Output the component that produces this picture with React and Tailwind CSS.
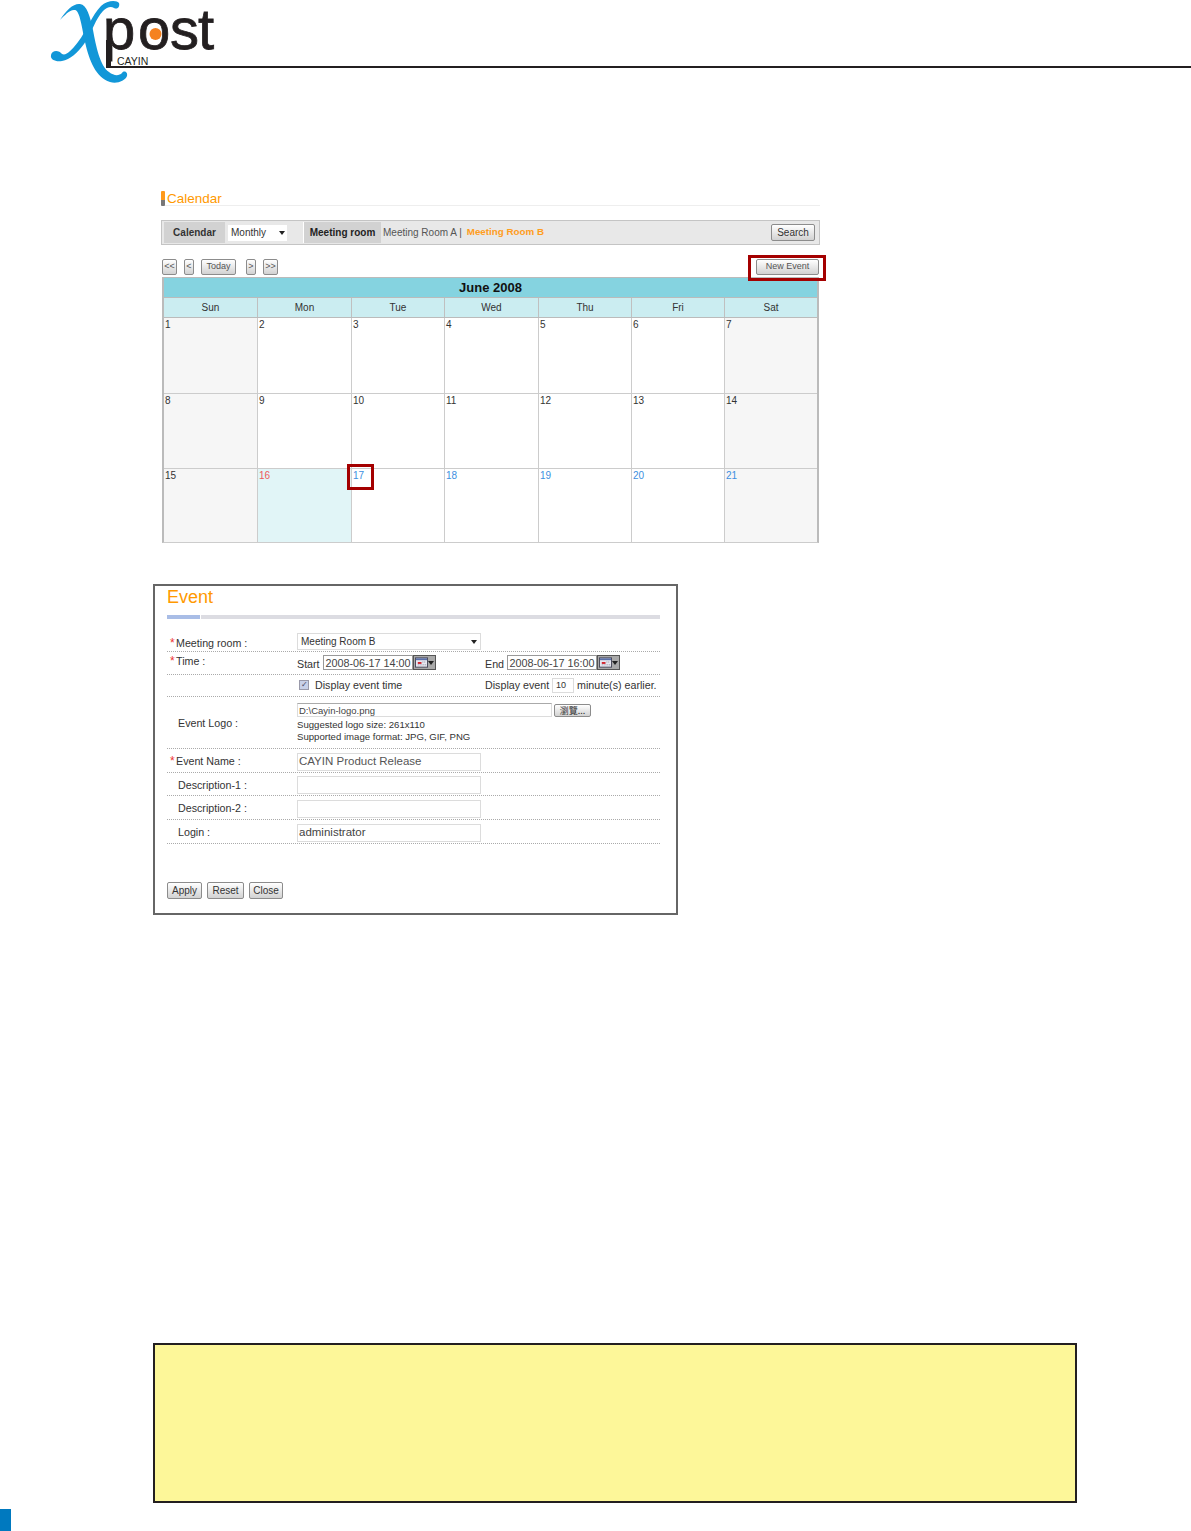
import React from "react";

const font = "font-['Liberation_Sans',Arial,sans-serif]";
const colClasses = "grid grid-cols-[93px_94px_93px_94px_93px_93px_93px]";
const dayNames = ["Sun", "Mon", "Tue", "Wed", "Thu", "Fri", "Sat"];
const weeks = [
  [1, 2, 3, 4, 5, 6, 7],
  [8, 9, 10, 11, 12, 13, 14],
  [15, 16, 17, 18, 19, 20, 21],
];

function Logo() {
  return (
    <svg className="shrink-0 ml-[50px] block" width="166" height="84" viewBox="50 0 166 84">
      <path fill="#1297d8" d="M60 20 C66 10 74 3 80 4 C87 5 90 16 93 30 C96 46 100 66 109 72 C114 76 119 76 122 73 C124 70 128 72 127 76 C125 81 117 84 110 82 C96 78 89 60 85 42 C82 28 80 11 75 10 C70 9 65 15 60 20 Z" />
      <path fill="#1297d8" d="M119 3 C117 0 107 0 101 6 C92 15 87 30 78 42 C71 51 66 56 62 54 C59 50 52 50 51 55 C50 60 56 62 62 61 C70 60 78 52 84 44 C92 32 96 18 103 11 C107 7 111 6 114 8 C118 10 120 6 119 3 Z" />
      <text x="103 138 170 198" y="49" fontFamily="'Liberation Sans',Arial,sans-serif" fontSize="58" fill="#231f20" stroke="#231f20" strokeWidth="0.8">post</text>
      <circle cx="155.5" cy="34" r="6" fill="#f58220" />
      <rect x="106" y="40" width="5" height="28" fill="#231f20" />
      <rect x="106" y="66" width="110" height="2" fill="#231f20" />
      <text x="117" y="64.5" fontFamily="'Liberation Sans',Arial,sans-serif" fontSize="10.5" fill="#231f20">CAYIN</text>
    </svg>
  );
}

function Btn({ children, className = "" }) {
  return (
    <div className={`flex items-center justify-center whitespace-nowrap rounded-[2px] border border-[#8c8c8c] bg-gradient-to-b from-white to-[#d2d2d2] ${className}`}>
      {children}
    </div>
  );
}

function Caret() {
  return <span className="block h-0 w-0 border-x-[3px] border-t-[4px] border-x-transparent border-t-[#222]" />;
}

function CalIcon() {
  return (
    <div className="flex h-[15px] w-[23px] shrink-0 items-center justify-between border border-[#555] bg-[#a9a9a9] pl-[1px] pr-[1px]">
      <svg width="14" height="11" viewBox="0 0 14 11">
        <rect x="0.5" y="0.5" width="13" height="10" fill="#e8e8f0" stroke="#445" />
        <rect x="1" y="1" width="12" height="2" fill="#5a6fa8" />
        <rect x="3" y="5" width="4" height="2" fill="#d0202a" />
        <path d="M8 5h4M3 8h9" stroke="#889" strokeWidth="1" strokeDasharray="1 1" />
      </svg>
      <Caret />
    </div>
  );
}

function Field({ children, className = "" }) {
  return (
    <div className={`flex items-center whitespace-nowrap border bg-white leading-none ${className}`}>
      {children}
    </div>
  );
}

function Row({ h, label, star, children, align = "items-center", className = "", labelClass = "" }) {
  return (
    <div className={`flex ${align} whitespace-nowrap border-b border-dotted border-[#aaa] text-[10.7px] text-[#333] ${className}`} style={{ height: h }}>
      <div className={`w-[130px] shrink-0 ${star ? "pl-[3px]" : "pl-[11px]"} ${labelClass}`}>
        {star && <span className="inline-block w-[6px] text-[12px] leading-none text-[#e33]">*</span>}
        {label}
      </div>
      <div className="min-w-0 flex-1">{children}</div>
    </div>
  );
}

export default function App() {
  return (
    <div className={`relative h-[1531px] w-[1191px] overflow-hidden bg-white ${font}`}>
      <header className="flex h-[84px]">
        <Logo />
        <div className="h-[68px] flex-1 border-b-2 border-[#231f20]" />
      </header>

      <section className="relative ml-[161px] mt-[107px] w-[659px]">
        <div className="flex h-[15px] items-center border-b border-[#eee]">
          <span className="h-[15px] w-[4px] rounded-[1px] bg-gradient-to-b from-[#ff9a1a] from-60% to-[#777] to-60%" />
          <span className="ml-[2px] pt-[1px] text-[13.5px] leading-none text-[#ff9900]">Calendar</span>
        </div>

        <div className="mt-[14px] flex h-[25px] items-center border border-[#c4c4c4] bg-[#e8e8e8] pl-[2px] pr-[4px] text-[10px]">
          <div className="flex h-[21px] w-[61px] items-center justify-center bg-[#d2d2d2] pb-[1px] font-bold text-[#333]">Calendar</div>
          <div className="ml-[3px] flex h-[16px] w-[59px] items-center justify-between bg-white pl-[3px] pr-[2px] text-[#333]">
            Monthly
            <Caret />
          </div>
          <div className="ml-[16px] flex h-[21px] w-[78px] items-center justify-center border-l border-white bg-[#d2d2d2] pb-[1px] font-bold text-[#222]">Meeting room</div>
          <div className="ml-[2px] pb-[1px] text-[#555]">Meeting Room A |</div>
          <div className="ml-[5px] pb-[1px] text-[9.8px] font-bold text-[#ff9d1e]">Meeting Room B</div>
          <Btn className="ml-auto h-[17px] w-[44px] pb-[1px] text-[#333]">Search</Btn>
        </div>

        <div className="mt-[10px] flex h-[22px] items-center pl-[1px] pt-[2px] text-[9px] text-[#555]">
          <Btn className="h-[16px] w-[15px]">&lt;&lt;</Btn>
          <Btn className="ml-[7px] h-[16px] w-[10px]">&lt;</Btn>
          <Btn className="ml-[7px] h-[16px] w-[35px]">Today</Btn>
          <Btn className="ml-[10px] h-[16px] w-[10px]">&gt;</Btn>
          <Btn className="ml-[7px] h-[16px] w-[15px]">&gt;&gt;</Btn>
          <Btn className="ml-auto mr-[1px] h-[16px] w-[63px]">New Event</Btn>
        </div>

        <div className="ml-[1px] w-[657px] border-x-2 border-b border-x-[#bbb] border-b-[#ccc]">
          <div className="flex h-[20px] items-center justify-center border-t border-[#bbb] bg-[#85d3e0] text-[13px] font-bold text-[#111]">June 2008</div>
          <div className={`${colClasses} h-[21px] border-y border-t-[#bbb] border-b-[#bbb] bg-[#cbedf1]`}>
            {dayNames.map((d, i) => (
              <div key={d} className={`flex items-center justify-center text-[10px] text-[#333] ${i ? "border-l border-[#c0c0c0]" : ""}`}>{d}</div>
            ))}
          </div>
          {weeks.map((w, wi) => (
            <div key={wi} className={`${colClasses} ${wi === 2 ? "h-[74px]" : "h-[75px]"} ${wi ? "border-t border-[#ccc]" : ""}`}>
              {w.map((n, i) => {
                const weekend = i === 0 || i === 6;
                const today = n === 16;
                const upcoming = n >= 17;
                return (
                  <div key={n} className={`pl-[1px] pt-[1px] text-[10px] leading-[12px] ${i ? "border-l border-[#ccc]" : ""} ${today ? "bg-[#e1f5f7] text-[#ee5a5a]" : weekend ? "bg-[#f6f6f6]" : "bg-white"} ${upcoming ? "text-[#3d8fe0]" : today ? "" : "text-[#333]"}`}>
                    {n}
                  </div>
                );
              })}
            </div>
          ))}
        </div>

        <div className="absolute left-[587px] top-[64px] h-[26px] w-[78px] border-[3px] border-[#a40000]" />
        <div className="absolute left-[186px] top-[273px] h-[26px] w-[27px] border-[3px] border-[#a40000]" />
      </section>

      <section className="ml-[153px] mt-[41px] h-[331px] w-[525px] border-2 border-[#666] pl-[12px]">
        <div className="h-[21px] pt-[1px] text-[18px] leading-[20px] text-[#ff9900]">Event</div>
        <div className="mt-[8px] flex h-[4px] w-[493px] gap-[1px]">
          <div className="w-[33px] bg-[#a9bde6]" />
          <div className="flex-1 bg-[#dcdce2]" />
        </div>
        <div className="w-[493px]">
          <Row h={33} label="Meeting room :" star align="items-end">
            <Field className="mb-[1px] h-[17px] w-[184px] justify-between border-[#dcdcdc] pl-[3px] pr-[3px] pt-[1px] text-[10px] text-[#333]">
              Meeting Room B
              <Caret />
            </Field>
          </Row>
          <Row h={23} label="Time :" star labelClass="pb-[3px]">
            <div className="flex items-center">
              <span className="w-[26px] pt-[3px]">Start</span>
              <Field className="h-[15px] w-[90px] justify-center border-[#999] text-[10.8px] text-[#444]">2008-06-17 14:00</Field>
              <CalIcon />
              <span className="ml-[49px] w-[22px] pt-[3px]">End</span>
              <Field className="h-[15px] w-[90px] justify-center border-[#999] text-[10.8px] text-[#444]">2008-06-17 16:00</Field>
              <CalIcon />
            </div>
          </Row>
          <Row h={22} label="">
            <div className="flex items-center">
              <span className="ml-[2px] flex h-[10px] w-[10px] items-center justify-center border border-[#99a] bg-[#c8d0e8] text-[8px] leading-none text-[#446]">✓</span>
              <span className="ml-[6px] w-[170px] shrink-0">Display event time</span>
              <span className="w-[67px] shrink-0">Display event</span>
              <Field className="h-[15px] w-[22px] border-[#dcdcdc] pl-[3px] text-[9px] text-[#333]">10</Field>
              <span className="ml-[3px]">minute(s) earlier.</span>
            </div>
          </Row>
          <Row h={52} label="Event Logo :" labelClass="pt-[2px]">
            <div className="flex items-center pt-[1px]">
              <Field className="h-[14px] w-[255px] border-[#dcdcdc] border-t-[#aaa] pl-[1px] pt-[1px] text-[9.5px] text-[#444]">D:\Cayin-logo.png</Field>
              <Btn className="ml-[2px] h-[13px] w-[37px] font-['Noto_Sans_CJK_TC','Liberation_Sans',sans-serif] text-[9px] leading-none text-[#333]">瀏覽...</Btn>
            </div>
            <div className="mt-[2px] text-[9.6px] leading-[12px] text-[#333]">Suggested logo size: 261x110</div>
            <div className="text-[9.6px] leading-[12px] text-[#333]">Supported image format: JPG, GIF, PNG</div>
          </Row>
          <Row h={24} label="Event Name :" star className="pt-[2px]">
            <Field className="h-[18px] w-[184px] border-[#dcdcdc] pl-[1px] text-[11.5px] text-[#555]">CAYIN Product Release</Field>
          </Row>
          <Row h={23} label="Description-1 :" className="pt-[2px]">
            <Field className="h-[18px] w-[184px] border-[#dcdcdc]" />
          </Row>
          <Row h={24} label="Description-2 :" className="pt-[2px]">
            <Field className="h-[18px] w-[184px] border-[#dcdcdc]" />
          </Row>
          <Row h={24} label="Login :" className="pt-[2px]">
            <Field className="h-[18px] w-[184px] border-[#dcdcdc] pl-[1px] text-[11.5px] text-[#444]">administrator</Field>
          </Row>
        </div>
        <div className="mt-[38px] flex gap-[5px] text-[10px] text-[#333]">
          <Btn className="h-[17px] w-[35px]">Apply</Btn>
          <Btn className="h-[17px] w-[37px]">Reset</Btn>
          <Btn className="h-[17px] w-[34px]">Close</Btn>
        </div>
      </section>

      <div className="ml-[153px] mt-[428px] h-[160px] w-[924px] border-2 border-[#231f20] bg-[#fdf799]" />
      <div className="mt-[6px] h-[22px] w-[11px] bg-[#0079bf]" />
    </div>
  );
}
